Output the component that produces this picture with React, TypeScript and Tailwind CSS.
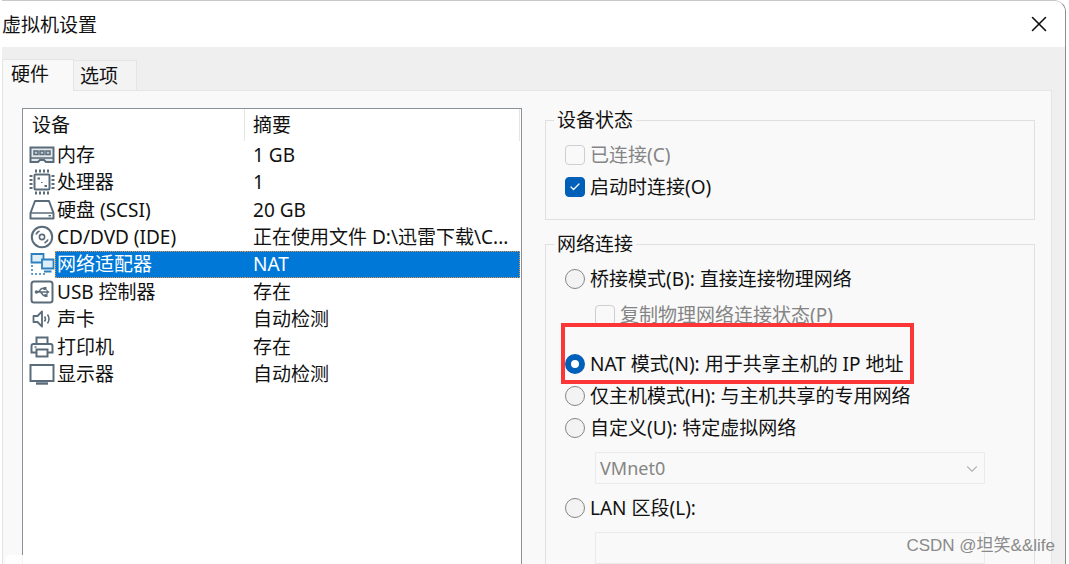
import React, { useState } from 'react';
import { Check, ChevronDown, X } from 'lucide-react';

const Icon = ({ children }: any) => (
    <svg width="26" height="26" viewBox="0 0 26 26" fill="none" stroke="#5a6b7a" strokeWidth="2" aria-hidden="true">
        {children}
    </svg>
);

const MemoryIcon = () => (
    <Icon>
        <path d="M1.5 5.500h23v14.500h-7.500l-2-2h-4l-2 2H1.500z" fill="#e3e8ec" />
        <path d="M5 9h4v3.500H5zM11 9h4v3.500h-4zM17 9h4v3.500h-4z" strokeWidth="1.500" fill="#c3ccd3" />
        <path d="M2 16h22" strokeWidth="1.400" />
    </Icon>
);

const CpuIcon = () => (
    <Icon>
        <rect x="5.5" y="5.5" width="15" height="15" rx="1" />
        <path d="M6 2h14M6 24h14M2 6v14M24 6v14" strokeWidth="3" strokeDasharray="2 2" />
        <path d="M8.5 9.5h2.500M15.500 17h2.500" />
        <path d="M12 13.500h1.500" strokeWidth="1.200" />
    </Icon>
);

const DiskIcon = () => (
    <Icon>
        <path d="M6 4h14l4.5 12v5.500h-23V16z" strokeLinejoin="round" />
        <path d="M1.5 16h23" strokeWidth="1.600" />
        <path d="M19.500 18.800h2.500" strokeWidth="1.500" />
    </Icon>
);

const DiscIcon = () => (
    <Icon>
        <circle cx="13" cy="13" r="10.2" />
        <circle cx="13" cy="13" r="2.6" strokeWidth="1.6" />
        <path d="M7 10.500A7 7 0 0 1 10.500 7M19 15.500A7 7 0 0 1 15.500 19" strokeWidth="1.8" />
    </Icon>
);

const NetworkIcon = () => (
    <Icon>
        <g stroke="#2f7fbd">
            <path d="M2.5 3h12v8.500h-12z" fill="#dceefa" strokeWidth="1.800" />
            <path d="M13 8.500h11.500v9H13z" fill="#dceefa" strokeWidth="1.800" />
            <path d="M15 20.500h7.500" />
            <path d="M3 14v9h15" strokeDasharray="2 2" strokeWidth="1.5" />
        </g>
    </Icon>
);

const UsbIcon = () => (
    <Icon>
        <rect x="2.5" y="2.5" width="21" height="21" rx="2.5" />
        <path d="M6 13h12M9.500 13l3-3.500h3M11.500 13l3 3.500h2" strokeWidth="1.5" />
        <circle cx="7.500" cy="13" r="1.8" fill="#5a6b7a" stroke="none" />
        <path d="M17.500 10.500v5l3-2.500zM14.500 8h3v3h-3zM15.500 15h3v3h-3z" fill="#5a6b7a" stroke="none" />
    </Icon>
);

const SoundIcon = () => (
    <Icon>
        <path d="M4.500 10h4l4.500-4.500v15L8.500 16h-4z" strokeWidth="1.8" strokeLinejoin="round" />
        <path d="M15.500 10.500q2 2.500 0 5M18.500 8.500q3 4.500 0 9" strokeWidth="1.5" />
    </Icon>
);

const PrinterIcon = () => (
    <Icon>
        <path d="M7.500 10V3.500h11V10" />
        <path d="M7.500 18.500H2.500V12q0-2 2-2h17q2 0 2 2v6.500h-5" />
        <path d="M7.500 15.500h11v7h-11z" />
        <path d="M5.500 13h2" strokeWidth="1.400" />
    </Icon>
);

const DisplayIcon = () => (
    <Icon>
        <rect x="1.500" y="4" width="23" height="16" />
        <path d="M7 22.500h12" strokeWidth="2.400" />
    </Icon>
);

const devices = [
    { name: '内存', summary: '1 GB', icon: MemoryIcon },
    { name: '处理器', summary: '1', icon: CpuIcon },
    { name: '硬盘 (SCSI)', summary: '20 GB', icon: DiskIcon },
    { name: 'CD/DVD (IDE)', summary: '正在使用文件 D:\\迅雷下载\\C...', icon: DiscIcon },
    { name: '网络适配器', summary: 'NAT', icon: NetworkIcon },
    { name: 'USB 控制器', summary: '存在', icon: UsbIcon },
    { name: '声卡', summary: '自动检测', icon: SoundIcon },
    { name: '打印机', summary: '存在', icon: PrinterIcon },
    { name: '显示器', summary: '自动检测', icon: DisplayIcon },
];

const DeviceTable = () => {
    const [selected, setSelected] = useState('网络适配器');

    return (
        <div className="min-w-0 border border-[#8a9199] bg-white pr-px">
            <table className="h-[279px] w-full table-fixed border-separate border-spacing-0 text-left">
                <colgroup>
                    <col className="w-8" />
                    <col className="w-[190px]" />
                    <col />
                </colgroup>
                <thead>
                    <tr className="h-8">
                        <th colSpan={2} className="border-r border-[#e5e5e5] p-0 pl-[9px] font-normal">设备</th>
                        <th className="border-r border-[#e5e5e5] p-0 pl-2 font-normal">摘要</th>
                    </tr>
                </thead>
                <tbody>
                    {devices.map(({ name, summary, icon: DeviceIcon }) => {
                        const active = name === selected;
                        return (
                            <tr key={name} onClick={() => setSelected(name)}>
                                <td className="p-0 pl-[6px]"><DeviceIcon /></td>
                                <td className={active ? 'border-y border-l border-dotted border-[#e8964a] bg-[#0078d7] p-0 pl-px text-white' : 'p-0 pl-[2px]'}>
                                    {name}
                                </td>
                                <td className={active ? 'truncate border-y border-r border-dotted border-[#e8964a] bg-[#0078d7] p-0 pl-2 text-white' : 'truncate p-0 pl-2'}>
                                    {summary}
                                </td>
                            </tr>
                        );
                    })}
                </tbody>
            </table>
        </div>
    );
};

const CheckRow = ({ label, disabled, defaultChecked }: any) => (
    <label className={`flex h-8 items-center gap-[5px] whitespace-nowrap ${disabled ? 'text-[#858585]' : ''}`}>
        <span className="relative flex size-5 shrink-0">
            <input
                type="checkbox"
                disabled={disabled}
                defaultChecked={defaultChecked}
                className="peer size-5 appearance-none rounded border border-[#8a8a8a] checked:border-[#005fb8] checked:bg-[#005fb8] disabled:border-[#cfcfcf]"
            />
            <Check size={12} strokeWidth={2.5} className="pointer-events-none absolute top-1 left-1 hidden text-white peer-checked:block" />
        </span>
        {label}
    </label>
);

const RadioRow = ({ label, value, mode, onChange, className }: any) => (
    <label className={`flex items-center gap-[5px] whitespace-nowrap ${className}`}>
        <input
            type="radio"
            name="network"
            checked={mode === value}
            onChange={() => onChange(value)}
            className="size-5 shrink-0 appearance-none rounded-full border border-[#868686] bg-[#f3f3f3] checked:border-6 checked:border-[#005fb8] checked:bg-white"
        />
        {label}
    </label>
);

const NetworkGroup = () => {
    const [mode, setMode] = useState('nat');

    return (
        <fieldset className="mt-3 min-w-0 border border-[#e0e0e0] pb-4">
            <legend className="ml-2 px-[3px]">网络连接</legend>
            <div className="pt-[7px] pl-[19px]">
                <RadioRow label="桥接模式(B): 直接连接物理网络" value="bridge" mode={mode} onChange={setMode} className="h-8" />
                <div className="h-7 pt-1 pl-[30px]">
                    <CheckRow label="复制物理网络连接状态(P)" disabled />
                </div>
                <div className="relative -ml-1 flex h-[61px] w-[353px] items-end border-4 border-[#fc3636] bg-[#f9f9f9]">
                    <RadioRow label="NAT 模式(N): 用于共享主机的 IP 地址" value="nat" mode={mode} onChange={setMode} className="h-8" />
                </div>
                <RadioRow label="仅主机模式(H): 与主机共享的专用网络" value="host" mode={mode} onChange={setMode} className="h-6" />
                <RadioRow label="自定义(U): 特定虚拟网络" value="custom" mode={mode} onChange={setMode} className="h-10" />
                <div className="relative mt-1 mr-[49px] ml-[30px]">
                    <select disabled aria-label="特定虚拟网络" className="block h-8 w-full appearance-none border border-[#ebebeb] bg-[#f9f9f9] pl-1 text-[18px] text-[#858585] opacity-100">
                        <option>VMnet0</option>
                    </select>
                    <ChevronDown size={18} strokeWidth={1.5} className="pointer-events-none absolute top-2 right-1 text-[#b5b5b5]" />
                </div>
                <RadioRow label="LAN 区段(L):" value="lan" mode={mode} onChange={setMode} className="h-12" />
                <div className="mr-[49px] ml-[30px]">
                    <input type="text" disabled aria-label="LAN 区段" className="block h-8 w-full border border-[#ebebeb] bg-[#f9f9f9] px-1" />
                </div>
            </div>
        </fieldset>
    );
};

export default function App() {
    return (
        <div className="h-screen overflow-hidden bg-white pr-[3px] pl-[2px] font-['Noto_Sans','Noto_Sans_CJK_SC',sans-serif] text-[19px] leading-6 text-[#111111]">
            <div className="relative flex h-full flex-col overflow-hidden rounded-tr-xl border-t border-r border-t-[#c8c8c8] border-r-[#8c8c8c] bg-[#efefef]">
                <header className="flex h-[46px] shrink-0 items-center justify-between bg-white pr-[14px]">
                    <h1 className="font-['Noto_Sans_CJK_SC',sans-serif]">虚拟机设置</h1>
                    <button aria-label="关闭" className="flex size-6 items-center justify-center">
                        <X size={26} strokeWidth={1.5} className="shrink-0" />
                    </button>
                </header>

                <div role="tablist" className="z-10 flex shrink-0 items-end pt-3">
                    <button role="tab" aria-selected="true" className="-mb-px h-8 w-[72px] border border-b-0 border-[#e5e5e5] bg-[#f9f9f9] pr-4 pb-1">
                        硬件
                    </button>
                    <button role="tab" aria-selected="false" className="h-[30px] w-[63px] border border-b-0 border-l-0 border-[#e5e5e5] bg-[#f3f3f3] pr-3">
                        选项
                    </button>
                </div>

                <main className="mr-[13px] grid min-h-0 flex-1 grid-cols-[50fr_49fr] gap-[23px] border border-b-0 border-[#e5e5e5] bg-[#f9f9f9] pt-[17px] pr-4 pl-[19px]">
                    <DeviceTable />
                    <div className="min-w-0">
                        <fieldset className="min-w-0 border border-[#e0e0e0] pb-4">
                            <legend className="ml-2 px-[3px]">设备状态</legend>
                            <div className="pt-[7px] pl-[19px]">
                                <CheckRow label="已连接(C)" disabled />
                                <CheckRow label="启动时连接(O)" defaultChecked />
                            </div>
                        </fieldset>
                        <NetworkGroup />
                    </div>
                </main>

                <div className="absolute bottom-0 left-[3px] z-10 h-[9px] w-[120px] rounded-t-sm bg-white/90 shadow-lg" />
                <p className="absolute right-[10px] bottom-[6px] z-10 font-['Liberation_Sans','Noto_Sans_CJK_SC',sans-serif] text-[17px] text-[#8a8a8a]">
                    CSDN @坦笑&amp;&amp;life
                </p>
            </div>
        </div>
    );
}
